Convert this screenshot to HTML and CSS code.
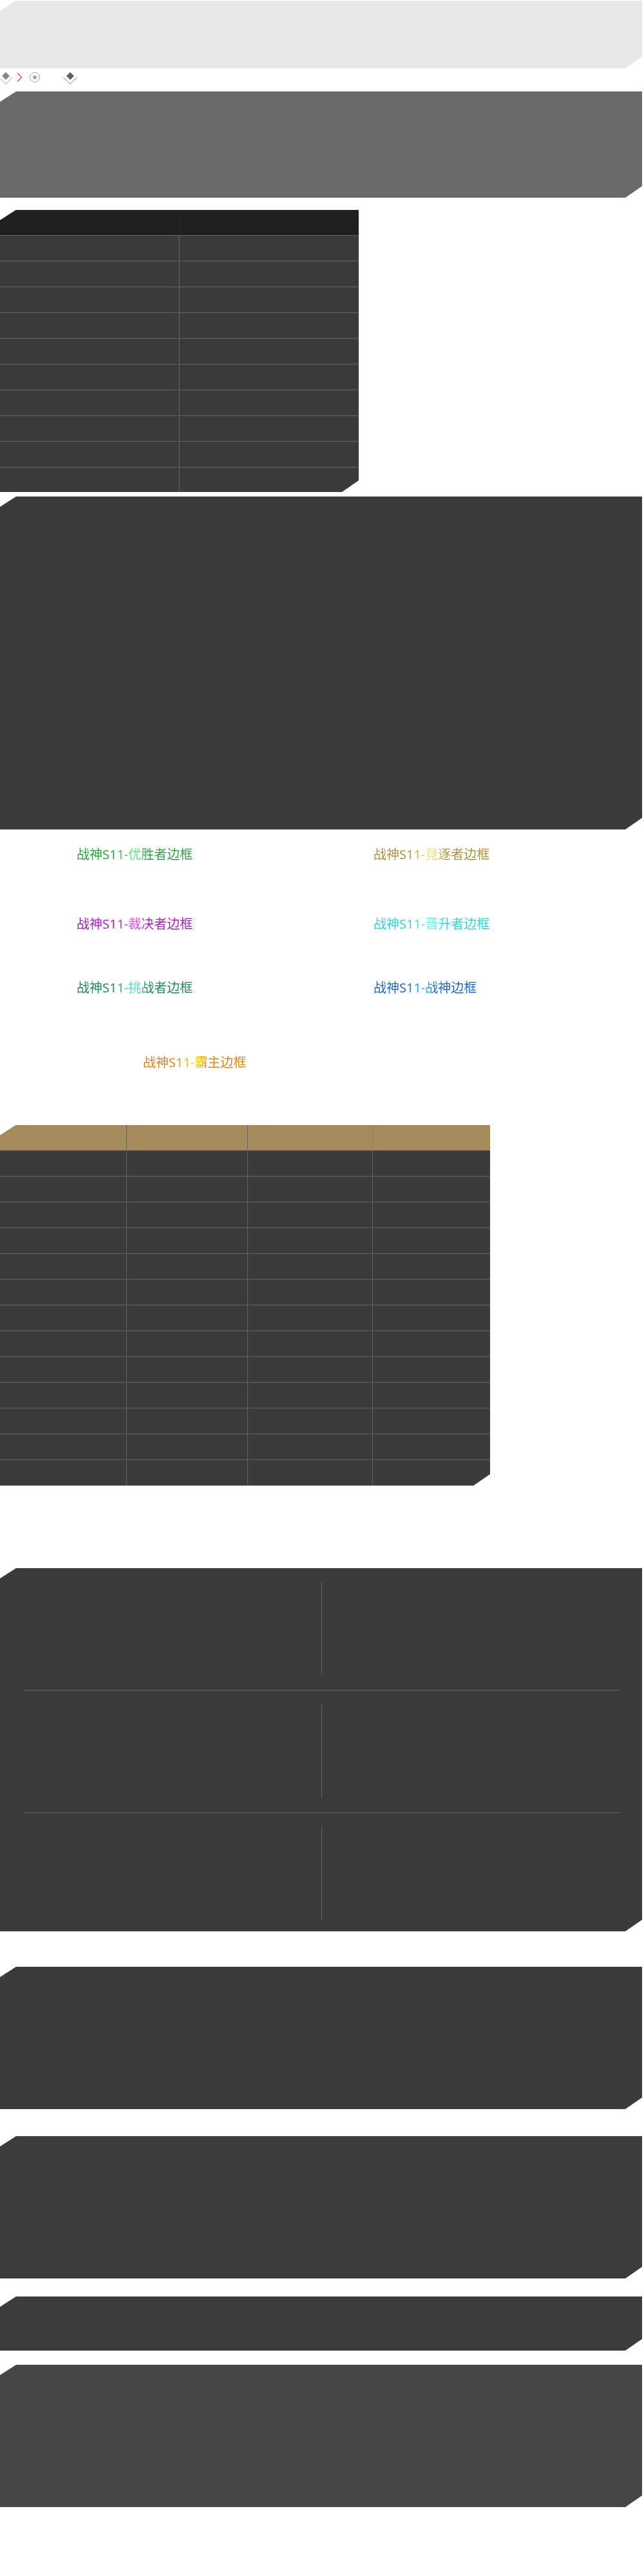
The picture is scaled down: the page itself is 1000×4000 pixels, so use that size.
FILE: index.html
```html
<!DOCTYPE html>
<html lang="zh-CN">
<head>
<meta charset="utf-8">
<meta name="viewport" content="width=device-width, initial-scale=1">
<title>战神S11</title>
<link rel="stylesheet" href="styles.css">
</head>
<body>
<main class="page">
  <section class="panel panel-light"></section>

  <div class="icons">
    <svg class="icon" width="20" height="20" viewBox="0 0 20 20" aria-hidden="true"><path d="M9 0l6 6-6 6-6-6z" fill="#858585"/><path d="M-1.500 8L9 18.500 19.500 8" fill="none" stroke="#999"/></svg>
    <svg class="icon" width="12" height="20" viewBox="0 0 12 20" aria-hidden="true"><path d="M2 1.500l6.500 6.500-6.500 6.500" fill="none" stroke="#f53b3b" stroke-width="1.300"/></svg>
    <svg class="icon icon-ring" width="18" height="20" viewBox="0 0 18 20" aria-hidden="true"><circle cx="9" cy="8" r="7.500" fill="none" stroke="#a3a8aa"/><circle cx="9" cy="8" r="3" fill="#a3abab"/></svg>
    <svg class="icon icon-dark" width="22" height="20" viewBox="0 0 22 20" aria-hidden="true"><path d="M11 0l6 6-6 6-6-6z" fill="#59626b"/><path d="M.5 8L11 18.500 21.500 8" fill="none" stroke="#6e7780"/></svg>
  </div>

  <section class="panel panel-gray"></section>

  <table class="sheet sheet-rank">
    <thead><tr><th></th><th></th></tr></thead>
    <tbody>
      <tr><td></td><td></td></tr>
      <tr><td></td><td></td></tr>
      <tr><td></td><td></td></tr>
      <tr><td></td><td></td></tr>
      <tr><td></td><td></td></tr>
      <tr><td></td><td></td></tr>
      <tr><td></td><td></td></tr>
      <tr><td></td><td></td></tr>
      <tr><td></td><td></td></tr>
      <tr><td></td><td></td></tr>
    </tbody>
  </table>

  <section class="panel panel-large"></section>

  <section class="frames">
    <p class="frame green"><span>战神S11-优胜者边框</span></p>
    <p class="frame sand"><span>战神S11-竞逐者边框</span></p>
    <p class="frame purple"><span>战神S11-裁决者边框</span></p>
    <p class="frame cyan"><span>战神S11-晋升者边框</span></p>
    <p class="frame teal"><span>战神S11-挑战者边框</span></p>
    <p class="frame blue"><span>战神S11-战神边框</span></p>
    <p class="frame orange"><span>战神S11-霸主边框</span></p>
  </section>

  <table class="sheet sheet-reward">
    <colgroup><col class="c1"><col class="c2"><col class="c3"><col class="c4"></colgroup>
    <thead><tr><th></th><th></th><th></th><th></th></tr></thead>
    <tbody>
      <tr><td></td><td></td><td></td><td></td></tr>
      <tr><td></td><td></td><td></td><td></td></tr>
      <tr><td></td><td></td><td></td><td></td></tr>
      <tr><td></td><td></td><td></td><td></td></tr>
      <tr><td></td><td></td><td></td><td></td></tr>
      <tr><td></td><td></td><td></td><td></td></tr>
      <tr><td></td><td></td><td></td><td></td></tr>
      <tr><td></td><td></td><td></td><td></td></tr>
      <tr><td></td><td></td><td></td><td></td></tr>
      <tr><td></td><td></td><td></td><td></td></tr>
      <tr><td></td><td></td><td></td><td></td></tr>
      <tr><td></td><td></td><td></td><td></td></tr>
      <tr><td></td><td></td><td></td><td></td></tr>
    </tbody>
  </table>

  <section class="panel panel-grid">
    <div class="pair"><div class="cell"></div><div class="cell"></div></div>
    <div class="pair"><div class="cell"></div><div class="cell"></div></div>
    <div class="pair"><div class="cell"></div><div class="cell"></div></div>
  </section>

  <section class="panel panel-note"></section>
  <section class="panel panel-note panel-second"></section>
  <section class="panel panel-short"></section>
  <section class="panel panel-note panel-last"></section>
</main>
</body>
</html>
```

FILE: styles.css
```css
* { box-sizing: border-box; }

body {
  margin: 0;
  background: #fff;
  font-family: "Noto Sans", "Noto Sans CJK SC", sans-serif;
}

.page {
  padding: 1px 3px 107px 0;
}

/* Panels with the top-left and bottom-right corners cut off */
.panel,
.sheet {
  background: #3b3b3b;
  clip-path: polygon(25px 0, 100% 0, 100% calc(100% - 18px), calc(100% - 26px) 100%, 0 100%, 0 16px);
}

.panel-light { min-height: 105px; background: #e8e8e8; }
.panel-gray { min-height: 165px; background: #6a6a6a; }
.panel-large { min-height: 517px; margin-top: 7px; }

.icons {
  display: flex;
  align-items: center;
  height: 36px;
  padding-bottom: 4px;
}
.icon { display: block; flex: none; }
.icon + .icon { margin-left: 5px; }
.icons .icon-ring { margin-left: 8px; }
.icons .icon-dark { margin-left: 35px; }

.sheet {
  border-collapse: separate;
  border-spacing: 0;
  table-layout: fixed;
}
.sheet th,
.sheet td {
  height: 40px;
  padding: 0;
  border-right: 1px solid #626262;
  border-bottom: 1px solid #626262;
}
.sheet th:last-child,
.sheet td:last-child { border-right: 0; }

.sheet-rank { width: 557px; max-width: 100%; margin-top: 19px; }
.sheet-rank th { background: #202020; border-right-color: #262626; }
.sheet-rank tbody tr:last-child td { height: 38px; border-bottom: 0; }

.frames {
  display: grid;
  grid-template-columns: 461px auto;
  grid-template-rows: 108px 99px 116px 112px;
  align-items: start;
  padding: 24px 0 0 119px;
}
.frame {
  margin: 0;
  font-size: 20px;
  line-height: 30px;
}
.frame span {
  display: inline-block;
  background-image: linear-gradient(to right, var(--base) 30%, var(--glow) 50%, var(--base) 62%);
  -webkit-background-clip: text;
  background-clip: text;
  color: transparent;
}
.green { --base: #2da044; --glow: #62f285; }
.sand { --base: #a8923e; --glow: #f5ee80; }
.purple { --base: #a41fc0; --glow: #f056f4; }
.cyan { --base: #2ed3d9; --glow: #70f8f8; }
.teal { --base: #1f8562; --glow: #4af5cd; }
.blue { --base: #1a66c8; --glow: #38b4f0; }
.orange { --base: #d8861a; --glow: #f2dc28; }
.frame.orange { grid-column: 1 / -1; padding-left: 103px; }

.sheet-reward { width: 761px; max-width: 100%; }
.sheet-reward .c1 { width: 197px; }
.sheet-reward .c2 { width: 188px; }
.sheet-reward .c3 { width: 194px; }
.sheet-reward th { background: #a68a5b; }
.sheet-reward th:nth-child(3) { border-right-color: #9a8056; }

.panel-grid {
  margin-top: 128px;
  padding: 0 35px 0 37px;
}
.pair {
  display: grid;
  grid-template-columns: 1fr 1fr;
  padding: 21px 0 22px;
  border-bottom: 1px solid #626262;
}
.pair:last-child { border-bottom: 0; padding-bottom: 17px; }
.cell { min-height: 146px; }
.cell:first-child { border-right: 1px solid #626262; }

.panel-note { min-height: 221px; margin-top: 55px; }
.panel-second { margin-top: 42px; background: #3c3c3c; }
.panel-short { min-height: 84px; margin-top: 28px; background: #3b3c3c; }
.panel-last { margin-top: 22px; background: #464646; }
```
